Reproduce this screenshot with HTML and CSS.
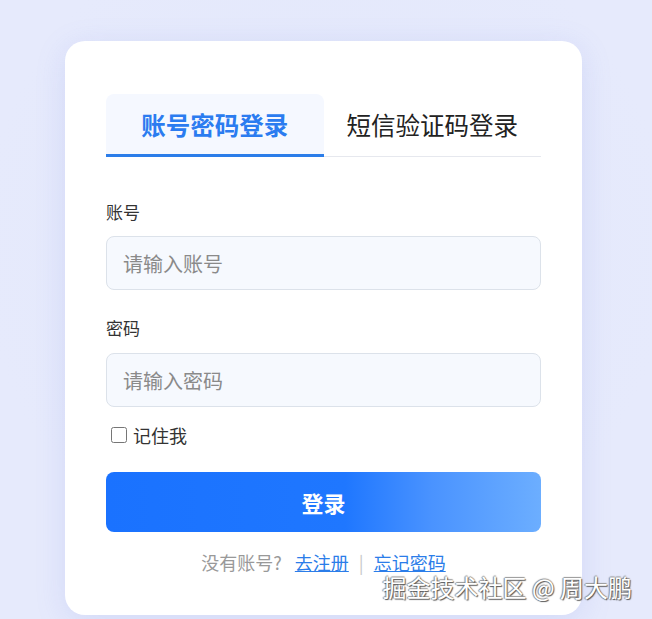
FILE: index.html
```html
<!DOCTYPE html>
<html lang="zh-CN">
<head>
  <meta charset="UTF-8">
  <meta name="viewport" content="width=device-width, initial-scale=1.0">
  <title>登录</title>
  <link rel="stylesheet" href="styles.css">
</head>
<body>
  <main class="login-card">
    <div class="tabs">
      <button class="tab active">账号密码登录</button>
      <button class="tab">短信验证码登录</button>
    </div>
    <form class="login-form">
      <label class="field-label" for="account">账号</label>
      <input id="account" class="field" type="text" placeholder="请输入账号">
      <label class="field-label second" for="password">密码</label>
      <input id="password" class="field" type="password" placeholder="请输入密码">
      <label class="remember"><input type="checkbox"><span>记住我</span></label>
      <button type="button" class="submit">登录</button>
      <p class="links">没有账号?<a class="first" href="#">去注册</a><span class="sep">|</span><a href="#">忘记密码</a></p>
    </form>
  </main>
  <div class="watermark">掘金技术社区 @ 周大鹏</div>
</body>
</html>
```

FILE: styles.css
```css
:root {
  --blue: #1b74ff;
  --blue-text: #2b7cf0;
  --text: #333;
  --muted: #999;
  --font: "Microsoft YaHei", "Noto Sans CJK SC", "Noto Sans", sans-serif;
}
* { box-sizing: border-box; }
html, body { margin: 0; padding: 0; }
body {
  font-family: var(--font);
  width: 652px;
  height: 619px;
  overflow: hidden;
  background: #e5eafc;
  background-image: radial-gradient(circle at 50% 40%, #e2e7fb 0, #e6eafc 70%);
  padding: 41px 0 0 65px;
  position: relative;
}
/* Card */
.login-card {
  width: 517px;
  height: 574px;
  background: #fff;
  border-radius: 20px;
  padding: 53px 41px 0 41px;
  box-shadow: 0 6px 30px rgba(120, 140, 230, 0.18);
}
/* Tabs */
.tabs { display: flex; border-bottom: 1px solid #e6e8ee; }
.tab {
  flex: 1;
  height: 63px;
  border: none;
  background: transparent;
  font-family: var(--font);
  font-size: 24.5px;
  color: #222;
  cursor: pointer;
  border-radius: 8px 8px 0 0;
  padding: 0;
  margin-bottom: -1px;
  border-bottom: 3px solid transparent;
}
.tab.active {
  background: #f5f8ff;
  color: var(--blue-text);
  font-weight: bold;
  border-bottom-color: #2b7de9;
}
/* Form */
.login-form { display: flex; flex-direction: column; }
.field-label { font-size: 17px; line-height: 24px; color: var(--text); margin-top: 43px; margin-bottom: 12px; }
.field-label.second { margin-top: 26px; margin-bottom: 13px; }
.field {
  height: 54px;
  border: 1px solid #dce2ea;
  border-radius: 8px;
  background: #f6f9fe;
  padding: 0 16px;
  font-family: var(--font);
  font-size: 20px;
  color: var(--text);
  outline: none;
}
.field::placeholder { color: #8a8a8a; }
.remember { display: flex; align-items: center; margin-top: 16px; height: 24px; font-size: 18px; color: var(--text); padding-left: 5px; }
.remember input { width: 16px; height: 16px; margin: 0 6px 0 0; }
.submit {
  margin-top: 25px;
  height: 60px;
  border: none;
  border-radius: 8px;
  background: linear-gradient(90deg, #1a72ff 0%, #1f77ff 55%, #4a93ff 75%, #6caeff 100%);
  color: #fff;
  font-family: var(--font);
  font-size: 22px;
  font-weight: bold;
  cursor: pointer;
}
.links { margin: 21px 0 0; text-align: center; font-size: 18px; line-height: 18px; color: var(--muted); }
.links a { color: #2b7de9; text-decoration: underline; }
.links a.first { margin-left: 13px; }
.links .sep { color: #c8c8c8; margin: 0 10px; }
/* Watermark */
.watermark {
  position: absolute;
  right: 20px;
  bottom: 20px;
  font-family: var(--font);
  font-size: 24px;
  line-height: 24px;
  color: #fff;
  text-shadow: 1px 1px 1px #555, -1px 0 1px #888, 0 -1px 1px #999;
}
```
